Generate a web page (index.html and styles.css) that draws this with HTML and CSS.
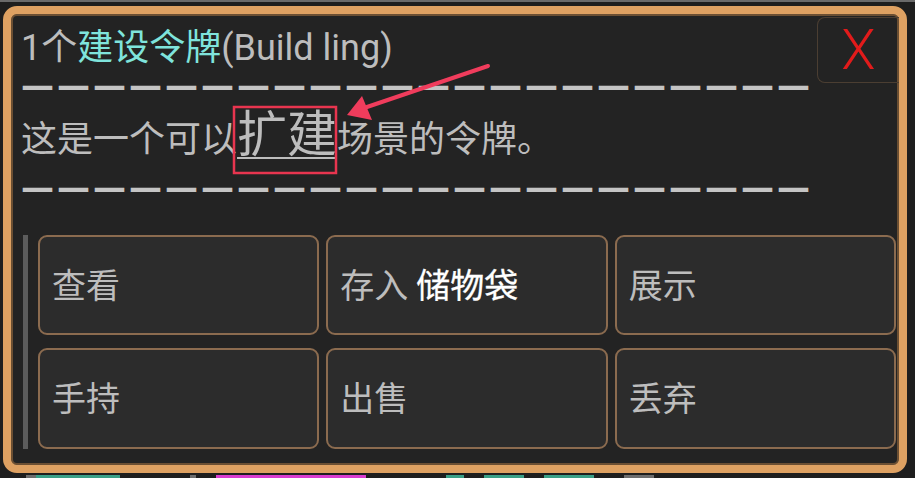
FILE: index.html
```html
<!DOCTYPE html>
<html lang="zh-CN">
<head>
  <meta charset="UTF-8">
  <title>建设令牌</title>
  <link rel="stylesheet" href="styles.css">
</head>
<body>
  <div class="topbar"></div>

  <div class="panel">
    <div class="title">1个<span class="item">建设令牌</span>(Build ling)</div>
    <div class="close">X</div>
    <div class="rule top">——————————————————————</div>
    <div class="desc">这是一个可以<span class="link">扩建</span>场景的令牌。</div>
    <div class="rule">——————————————————————</div>

    <div class="actions">
      <div class="bar"></div>
      <div class="grid">
        <div class="btn">查看</div>
        <div class="btn">存入 <b>储物袋</b></div>
        <div class="btn">展示</div>
        <div class="btn">手持</div>
        <div class="btn">出售</div>
        <div class="btn">丢弃</div>
      </div>
    </div>
  </div>

  <!-- bits of the game screen behind the dialog -->
  <div class="behind">
    <span class="chip g" style="width:10px"></span>
    <span class="chip t" style="width:30px"></span>
    <span class="chip t" style="width:28px"></span>
    <span class="chip t" style="width:26px"></span>
    <span class="chip g" style="width:6px; margin-left:70px"></span>
    <span class="chip m" style="width:30px; margin-left:20px"></span>
    <span class="chip m" style="width:120px"></span>
    <span class="chip t" style="width:18px; margin-left:80px"></span>
    <span class="chip t" style="width:40px; margin-left:20px"></span>
    <span class="chip t" style="width:50px; margin-left:20px"></span>
    <span class="chip g" style="width:30px; margin-left:30px"></span>
  </div>

  <!-- annotation -->
  <svg class="note" width="915" height="478" viewBox="0 0 915 478">
    <rect x="234" y="107" width="102" height="66" fill="none" stroke="#e8354f" stroke-width="2.5"/>
    <line x1="488" y1="66" x2="364" y2="108" stroke="#f03c5c" stroke-width="4" stroke-linecap="round"/>
    <polygon points="347,115 362,96 372,120" fill="#f03c5c"/>
  </svg>
</body>
</html>
```

FILE: styles.css
```css
body {
  margin: 0;
  background: #1e1e1e;
  font-family: Roboto, "Noto Sans CJK SC", sans-serif;
  color: #bdbdbd;
  position: relative;
  height: 478px;
  overflow: hidden;
}
.topbar {
  height: 2px;
  background: #6a6a6a;
}
.panel {
  position: relative;
  box-sizing: border-box;
  width: 904px;
  height: 467px;
  margin: 4px 0 0 3px;
  padding: 11px 0 0 10px;
  background: #232323;
  border: 8px solid #dea162;
  border-radius: 14px;
  box-shadow: inset 0 0 0 2px #6b4f33;
}
.title {
  font-size: 36px;
  line-height: 46px;
  white-space: nowrap;
}
.item { color: #7fe4dc; }
.close {
  position: absolute;
  top: 3px;
  right: 0;
  box-sizing: border-box;
  width: 82px;
  height: 66px;
  border: 1px solid #4b3e32;
  border-right: none;
  border-radius: 8px 0 0 8px;
  color: #e11b1b;
  font-size: 56px;
  font-weight: 300;
  line-height: 64px;
  text-align: center;
}
.rule {
  font-family: "DejaVu Sans", sans-serif;
  font-size: 33px;
  font-weight: bold;
  letter-spacing: 3px;
  line-height: 35px;
  color: #c4c4c4;
  white-space: nowrap;
}
.rule.top { margin-top: -3px; }
.desc {
  font-size: 36px;
  line-height: 60px;
  padding-top: 7px;
  white-space: nowrap;
}
.link {
  font-size: 50px;
  line-height: 1;
  text-decoration: underline;
  text-decoration-thickness: 2px;
  text-underline-offset: 5px;
}
.actions {
  display: flex;
  gap: 10px;
  margin-top: 30px;
  padding-right: 3px;
}
.bar {
  width: 5px;
  margin-left: 2px;
  background: #5c5c5c;
}
.grid {
  flex: 1;
  display: grid;
  grid-template-columns: repeat(3, 1fr);
  grid-template-rows: 100px 101px;
  column-gap: 7px;
  row-gap: 13px;
}
.btn {
  display: flex;
  align-items: center;
  box-sizing: border-box;
  padding: 0 0 4px 12px;
  background: #2c2c2c;
  border: 2px solid #8b6b4f;
  border-radius: 9px;
  font-size: 34px;
  white-space: nowrap;
}
.btn b {
  color: #fff;
  font-weight: 400;
  -webkit-text-stroke: 0.3px #fff;
  margin-left: 8px;
}
.behind {
  display: flex;
  margin: 2px 0 0 26px;
}
.chip {
  height: 6px;
}
.chip.t { background: #3a9f86; }
.chip.m { background: #d93ccf; }
.chip.g { background: #6d6d6d; }
.note {
  position: absolute;
  top: 0;
  left: 0;
  pointer-events: none;
}
```
